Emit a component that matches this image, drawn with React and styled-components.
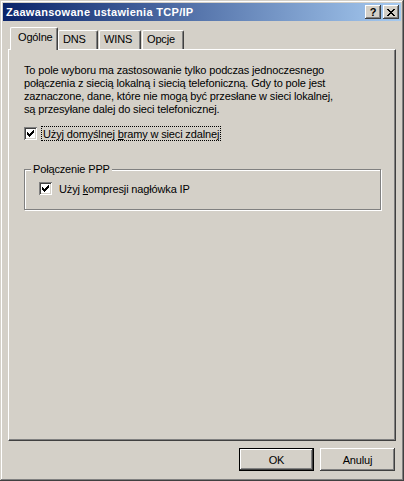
import styled, { createGlobalStyle } from 'styled-components';

const GlobalStyle = createGlobalStyle`
    html, body {
        margin: 0;
        padding: 0;
        background: #d4d0c8;
    }
    body {
        font-family: "Liberation Sans", Arial, sans-serif;
        font-size: 11px;
        letter-spacing: -0.15px;
        color: #000000;
    }
`

const Window = styled.div`
    box-sizing: border-box;
    width: 404px;
    height: 481px;
    padding: 3px;
    display: flex;
    flex-direction: column;
    background: #d4d0c8;
    box-shadow: inset -1px -1px #404040, inset 1px 1px #d4d0c8,
        inset -2px -2px #808080, inset 2px 2px #ffffff;
`

const TitleBar = styled.div`
    height: 18px;
    display: flex;
    align-items: center;
    padding: 0 2px 0 2px;
    background: linear-gradient(to right, #0a246a, #a6caf0);
`

const Title = styled.div`
    flex: 1;
    color: #ffffff;
    font-weight: bold;
    font-size: 11px;
    padding-left: 1px;
    letter-spacing: 0.3px;
`

const TitleButton = styled.div`
    box-sizing: border-box;
    width: 16px;
    height: 14px;
    margin-left: ${p => (p.$gap ? '2px' : '0')};
    display: flex;
    align-items: center;
    justify-content: center;
    background: #d4d0c8;
    box-shadow: inset -1px -1px #404040, inset 1px 1px #ffffff,
        inset -2px -2px #808080, inset 2px 2px #d4d0c8;
    font-weight: bold;
    font-size: 11px;
    line-height: 1;
`

const Body = styled.div`
    flex: 1;
    display: flex;
    flex-direction: column;
    padding: 6px 5px 7px 5px;
`

const TabStrip = styled.div`
    height: 22px;
    display: flex;
    align-items: flex-end;
    padding-left: 2px;
    position: relative;
    z-index: 1;
`

const Tab = styled.div`
    box-sizing: border-box;
    width: ${p => p.$w}px;
    height: ${p => (p.$active ? 23 : 19)}px;
    margin: ${p => (p.$active ? '0 -1px 0 0' : '0 0 0 1px')};
    padding: ${p => (p.$active ? '3px 0 0 7px' : '2px 0 0 4px')};
    background: #d4d0c8;
    border-top: 1px solid #ffffff;
    border-left: 1px solid #ffffff;
    border-right: 1px solid #404040;
    border-top-left-radius: 2px;
    border-top-right-radius: 2px;
    box-shadow: inset -1px 0 #808080;
    white-space: nowrap;
    align-self: flex-end;
    margin-bottom: ${p => (p.$active ? '-1px' : '0')};
`

const Panel = styled.div`
    flex: 1;
    box-sizing: border-box;
    padding: 14px 15px 0 15px;
    border-top: 1px solid #ffffff;
    border-left: 1px solid #ffffff;
    border-right: 1px solid #404040;
    border-bottom: 1px solid #404040;
    box-shadow: inset -1px -1px #808080;
`

const Paragraph = styled.p`
    margin: 0;
    line-height: 13px;
`

const CheckRow = styled.label`
    display: flex;
    align-items: center;
    height: 15px;
    margin-top: ${p => p.$mt || 0}px;
`

const Box = styled.span`
    box-sizing: border-box;
    width: 13px;
    height: 13px;
    display: flex;
    align-items: center;
    justify-content: center;
    background: #ffffff;
    box-shadow: inset 1px 1px #808080, inset -1px -1px #ffffff,
        inset 2px 2px #404040, inset -2px -2px #d4d0c8;
`

const CheckLabel = styled.span`
    margin-left: ${p => (p.$focus ? 4 : 5)}px;
    padding: 0 1px;
    height: 15px;
    line-height: 14px;
    box-sizing: border-box;
    border: 1px ${p => (p.$focus ? 'dotted #000000' : 'solid transparent')};
`

const Key = styled.span`
    text-decoration: underline;
    text-underline-offset: 1px;
`

const GroupBox = styled.div`
    position: relative;
    width: 357px;
    box-sizing: border-box;
    margin-top: 28px;
    padding: 11px 0 13px 14px;
    border: 1px solid #808080;
    box-shadow: inset 1px 1px #ffffff, 1px 1px #ffffff;
`

const Legend = styled.span`
    position: absolute;
    top: -8px;
    left: 6px;
    padding: 0 2px;
    background: #d4d0c8;
    line-height: 14px;
`

const Footer = styled.div`
    display: flex;
    justify-content: flex-end;
    gap: 6px;
    padding-top: 7px;
    padding-right: 1px;
`

const Button = styled.div`
    box-sizing: border-box;
    width: 75px;
    height: 23px;
    display: flex;
    align-items: center;
    justify-content: center;
    background: #d4d0c8;
    box-shadow: ${p =>
        p.$default
            ? 'inset 0 0 0 1px #000000, inset -2px -2px #404040, inset 2px 2px #ffffff, inset -3px -3px #808080'
            : 'inset -1px -1px #404040, inset 1px 1px #ffffff, inset -2px -2px #808080, inset 2px 2px #d4d0c8'};
`

function Check() {
    return (
        <svg width="7" height="7" viewBox="0 0 7 7" shapeRendering="crispEdges">
            <path d="M0 2h1v3H0zM1 3h1v3H1zM2 4h1v3H2zM3 3h1v3H3zM4 2h1v3H4zM5 1h1v3H5zM6 0h1v3H6z" fill="#000" />
        </svg>
    );
}

export default function App() {
    return (
        <>
            <GlobalStyle />
            <Window>
                <TitleBar>
                    <Title>Zaawansowane ustawienia TCP/IP</Title>
                    <TitleButton>?</TitleButton>
                    <TitleButton $gap>
                        <svg width="8" height="7" viewBox="0 0 8 7" shapeRendering="crispEdges">
                            <path d="M0 0h2v1h1v1h2V1h1V0h2v1H7v1H6v1H5v1h1v1h1v1h1v1H6V6H5V5H3v1H2v1H0V6h1V5h1V4h1V3H2V2H1V1H0z" fill="#000" />
                        </svg>
                    </TitleButton>
                </TitleBar>
                <Body>
                    <TabStrip>
                        <Tab $active $w={48}>Ogólne</Tab>
                        <Tab $w={40}>DNS</Tab>
                        <Tab $w={42}>WINS</Tab>
                        <Tab $w={42}>Opcje</Tab>
                    </TabStrip>
                    <Panel>
                        <Paragraph>
                            To pole wyboru ma zastosowanie tylko podczas jednoczesnego<br />
                            połączenia z siecią lokalną i siecią telefoniczną. Gdy to pole jest<br />
                            zaznaczone, dane, które nie mogą być przesłane w sieci lokalnej,<br />
                            są przesyłane dalej do sieci telefonicznej.
                        </Paragraph>
                        <CheckRow $mt={10}>
                            <Box><Check /></Box>
                            <CheckLabel $focus>Użyj domyślnej <Key>b</Key>ramy w sieci zdalnej</CheckLabel>
                        </CheckRow>
                        <GroupBox>
                            <Legend>Połączenie PPP</Legend>
                            <CheckRow>
                                <Box><Check /></Box>
                                <CheckLabel>Użyj <Key>k</Key>ompresji nagłówka IP</CheckLabel>
                            </CheckRow>
                        </GroupBox>
                    </Panel>
                    <Footer>
                        <Button $default>OK</Button>
                        <Button>Anuluj</Button>
                    </Footer>
                </Body>
            </Window>
        </>
    );
}
